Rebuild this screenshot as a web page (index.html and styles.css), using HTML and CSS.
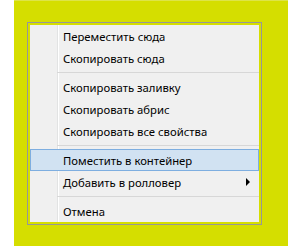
FILE: index.html
```html
<!DOCTYPE html>
<html>
<head>
    <title>Context menu</title>
    <link rel="stylesheet" href="styles.css">
</head>

<body>
    <div class="stage">
        <div class="menu">
            <div class="item">Переместить сюда</div>
            <div class="item">Скопировать сюда</div>
            <div class="separator"></div>
            <div class="item">Скопировать заливку</div>
            <div class="item">Скопировать абрис</div>
            <div class="item">Скопировать все свойства</div>
            <div class="separator"></div>
            <div class="item active">Поместить в контейнер</div>
            <div class="item">Добавить в ролловер <span class="arrow"></span></div>
            <div class="separator"></div>
            <div class="item">Отмена</div>
        </div>
    </div>
</body>
</html>
```

FILE: styles.css
```css
body {
    margin: 0;
    background: #ffffff;
    font-family: "Noto Sans", sans-serif;
    font-size: 11.3px;
}

.stage {
    margin-left: 14px;
    height: 246px;
    box-sizing: border-box;
    background: #d5de00;
    border-top: 1px solid #dde448;
    padding: 21px 0 0 13px;
}

.menu {
    width: 235px;
    box-sizing: border-box;
    border: 1px solid #979797;
    padding: 2px;
    background-color: #f0f0f0;
    /* gutter line next to the icon column */
    background-image: linear-gradient(to right, transparent 27px, #e2e3e3 27px, #e2e3e3 28px, #ffffff 28px, #ffffff 29px, transparent 29px);
    background-origin: content-box;
    background-clip: content-box;
    background-repeat: no-repeat;
}

.item {
    display: flex;
    align-items: center;
    height: 22px;
    box-sizing: border-box;
    border: 1px solid transparent;
    padding-left: 32px;
    color: #000000;
    white-space: nowrap;
}

.item.active {
    background: #d1e2f2;
    border-color: #7eaee0;
}

.arrow {
    margin-left: auto;
    margin-right: 8px;
    width: 0;
    height: 0;
    border-top: 4px solid transparent;
    border-bottom: 4px solid transparent;
    border-left: 4px solid #000000;
}

.separator {
    height: 7px;
    box-sizing: border-box;
    margin-left: 27px;
    padding-top: 3px;
}

.separator::before {
    content: "";
    display: block;
    height: 1px;
    background: #d7d7d7;
}
```
